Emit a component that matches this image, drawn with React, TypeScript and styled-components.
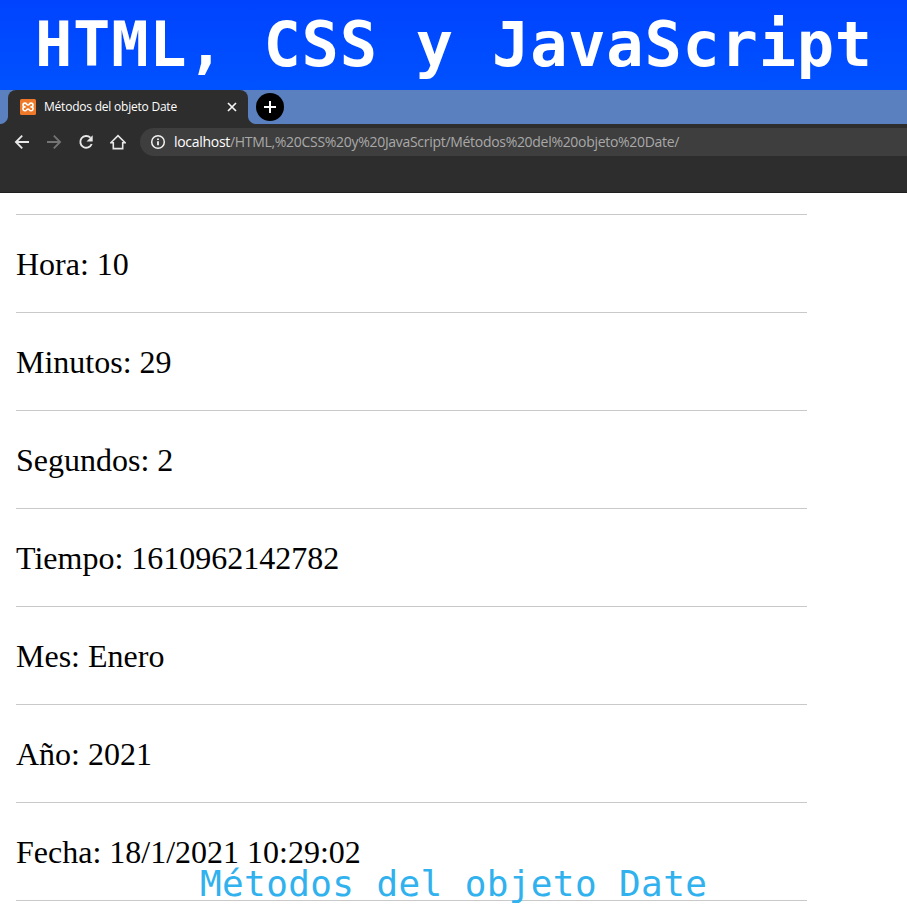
import React from "react";
import styled, { createGlobalStyle } from "styled-components";

const GlobalStyle = createGlobalStyle`
  * { box-sizing: border-box; }
  body { margin: 0; background: #fff; overflow: hidden; }
`;

const Screen = styled.div`
  position: relative;
  width: 907px;
  height: 907px;
  overflow: hidden;
  background: #fff;
`;

const Banner = styled.header`
  height: 90px;
  padding-left: 35px;
  background: linear-gradient(#0043ff, #0052ff);
`;

const BannerTitle = styled.h1`
  margin: 0;
  font: bold 62px/89px "DejaVu Sans Mono", monospace;
  letter-spacing: 0.76px;
  white-space: pre;
  color: #fff;
`;

const TabStrip = styled.div`
  display: flex;
  height: 34px;
  background: #5a80bf;
`;

const Flare = styled.span<{ $side: "left" | "right" }>`
  align-self: flex-end;
  width: 8px;
  height: 8px;
  background: radial-gradient(
    circle at ${(p) => (p.$side === "left" ? "0 0" : "100% 0")},
    #5a80bf 7.5px,
    #2d2d2d 8.5px
  );
`;

const Tab = styled.div`
  display: flex;
  align-items: center;
  width: 240px;
  height: 34px;
  padding: 0 10px 0 12px;
  border-radius: 8px 8px 0 0;
  background: #2d2d2d;
`;

const TabTitle = styled.span`
  flex: 1;
  margin-left: 8px;
  font: 12px/16px "Open Sans", sans-serif;
  letter-spacing: -0.22px;
  white-space: nowrap;
  color: #fff;
`;

const NewTab = styled.button`
  display: flex;
  align-items: center;
  justify-content: center;
  width: 28px;
  height: 28px;
  margin-top: 3px;
  padding: 0;
  border: 0;
  border-radius: 50%;
  background: #000;
`;

const Toolbar = styled.div`
  display: flex;
  height: 69px;
  padding: 4px 0 0 14px;
  border-bottom: 1px solid #1f1f1f;
  background: #2d2d2d;
`;

const NavButtons = styled.nav`
  display: flex;
  gap: 16px;
  align-items: center;
  height: 28px;
  width: 126px;
  flex: none;
`;

const AddressBar = styled.div`
  display: flex;
  flex: 1;
  align-items: center;
  height: 28px;
  padding-left: 10px;
  border-radius: 14px 0 0 14px;
  background: #3e3e3e;
`;

const Url = styled.span`
  margin-left: 8px;
  font: 14px/20px "Open Sans", sans-serif;
  letter-spacing: -0.3px;
  white-space: nowrap;
  color: #a9a9a9;
`;

const Host = styled.span`
  color: #fff;
`;

const Page = styled.main`
  width: 823px;
  padding: 21px 16px 0;
`;

const Entry = styled.p`
  height: 98px;
  margin: 0;
  padding-top: 31px;
  border-top: 1px solid #c9c9c9;
  font: 32px/37px "Liberation Serif", serif;
  color: #000;
`;

const Caption = styled.div`
  position: absolute;
  left: 200px;
  top: 863px;
  font: 36px/42px "DejaVu Sans Mono", monospace;
  letter-spacing: 0.38px;
  white-space: pre;
  color: #31b2ee;
`;

const Glyph = styled.svg`
  display: block;
  flex: none;
  fill: none;
`;

const Favicon = () => (
  <Glyph width="16" height="16" viewBox="0 0 16 16">
    <rect width="16" height="16" rx="1.5" fill="#ef7928" />
    <path
      d="M5.6 7.9H4.9a1.9 1.9 0 0 1 0-3.8C7 4.1 6.3 6 8 6s1-1.9 3.1-1.9a1.9 1.9 0 0 1 0 3.8 1.9 1.9 0 0 1 0 3.9C9 11.8 9.7 10 8 10s-1 1.8-3.1 1.8a1.9 1.9 0 0 1 0-3.9M10.4 7.9h.8"
      stroke="#fff"
      strokeWidth="1.6"
    />
  </Glyph>
);

const Arrow = ({ forward = false }: { forward?: boolean }) => (
  <Glyph width="16" height="16" viewBox="0 0 16 16">
    <path
      d={forward ? "M1 8h12.5M7.8 1.7 14.1 8l-6.3 6.3" : "M15 8H2.5M8.2 1.7 1.9 8l6.3 6.3"}
      stroke={forward ? "#747474" : "#e8e8e8"}
      strokeWidth="1.8"
    />
  </Glyph>
);

const Reload = () => (
  <Glyph width="16" height="16" viewBox="0 0 16 16">
    <path d="M12.4 3.7A5.9 5.9 0 1 0 13.7 10" stroke="#e8e8e8" strokeWidth="1.9" />
    <path d="M14.7 1.2v6.2H8.5Z" fill="#e8e8e8" />
  </Glyph>
);

const Home = () => (
  <Glyph width="16" height="16" viewBox="0 0 16 16">
    <path d="M.9 8.7H3.3V14.6h9.4V8.7h2.4L8 1.6Z" stroke="#e8e8e8" strokeWidth="1.6" />
  </Glyph>
);

const Info = () => (
  <Glyph width="16" height="16" viewBox="0 0 16 16">
    <circle cx="8" cy="8" r="6.3" stroke="#f2f2f2" strokeWidth="1.5" />
    <path d="M8 7.2v4M8 4.5V6" stroke="#f2f2f2" strokeWidth="1.8" />
  </Glyph>
);

const entries = [
  "Hora: 10",
  "Minutos: 29",
  "Segundos: 2",
  "Tiempo: 1610962142782",
  "Mes: Enero",
  "Año: 2021",
  "Fecha: 18/1/2021 10:29:02",
  "",
];

export default function App() {
  return (
    <>
      <GlobalStyle />
      <Screen>
        <Banner>
          <BannerTitle>HTML, CSS y JavaScript</BannerTitle>
        </Banner>
        <TabStrip>
          <Flare $side="left" />
          <Tab>
            <Favicon />
            <TabTitle>Métodos del objeto Date</TabTitle>
            <Glyph width="12" height="12" viewBox="0 0 12 12">
              <path d="m2 2 8 8m0-8-8 8" stroke="#f5f5f5" strokeWidth="1.7" />
            </Glyph>
          </Tab>
          <Flare $side="right" />
          <NewTab aria-label="Nueva pestaña">
            <Glyph width="14" height="14" viewBox="0 0 14 14">
              <path d="M7 1v12M1 7h12" stroke="#fff" strokeWidth="2" />
            </Glyph>
          </NewTab>
        </TabStrip>
        <Toolbar>
          <NavButtons>
            <Arrow />
            <Arrow forward />
            <Reload />
            <Home />
          </NavButtons>
          <AddressBar>
            <Info />
            <Url>
              <Host>localhost</Host>
              /HTML,%20CSS%20y%20JavaScript/Métodos%20del%20objeto%20Date/
            </Url>
          </AddressBar>
        </Toolbar>
        <Page>
          {entries.map((text, i) => (
            <Entry key={i}>{text}</Entry>
          ))}
        </Page>
        <Caption>Métodos del objeto Date</Caption>
      </Screen>
    </>
  );
}
